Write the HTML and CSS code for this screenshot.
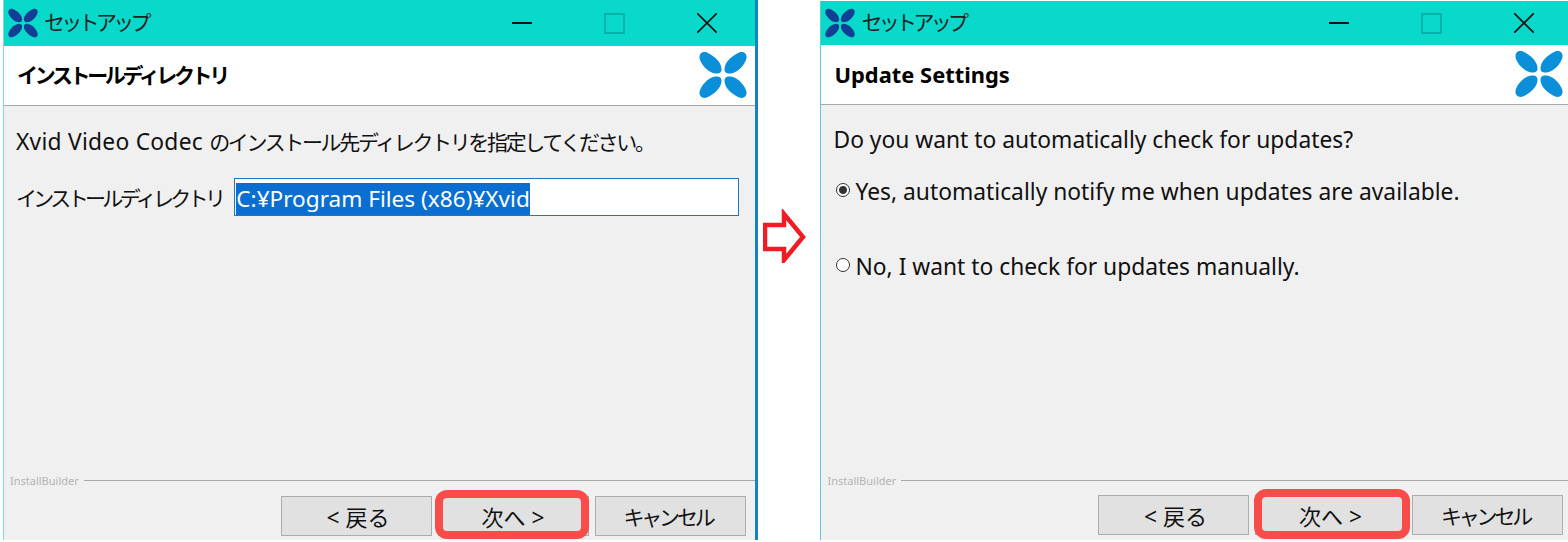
FILE: index.html
```html
<!DOCTYPE html>
<html lang="ja">
<head>
    <meta charset="UTF-8">
    <title>Xvid セットアップ</title>
    <link rel="stylesheet" href="styles.css">
</head>
<body>
    <!-- Shared logo shape -->
    <svg class="defs" width="0" height="0">
        <symbol id="petals" viewBox="0 0 48 46">
            <path d="M0.5 6C0 1 4-1 8 0.5 14 3 22.5 10 22.5 17 22.5 21 20 22 16 21.5 9 20.5 1.5 12 0.5 6Z"/>
            <path d="M47.5 6C48 1 44-1 40 0.5 34 3 25.5 10 25.5 17 25.5 21 28 22 32 21.5 39 20.5 46.5 12 47.5 6Z"/>
            <path d="M0.5 40C0 45 4 47 8 45.5 14 43 22.5 36 22.5 29 22.5 25 20 24 16 24.5 9 25.5 1.5 34 0.5 40Z"/>
            <path d="M47.5 40C48 45 44 47 40 45.5 34 43 25.5 36 25.5 29 25.5 25 28 24 32 24.5 39 25.5 46.5 34 47.5 40Z"/>
        </symbol>
    </svg>

    <!-- Install directory window -->
    <div class="window window-left">
        <div class="titlebar">
            <svg class="logo-small"><use href="#petals"/></svg>
            <span class="title kana">セットアップ</span>
            <div class="controls">
                <span class="control"><i class="minimize"></i></span>
                <span class="control"><i class="maximize"></i></span>
                <span class="control">
                    <svg class="close" viewBox="0 0 20 20"><path d="M0 0L20 20M20 0L0 20"/></svg>
                </span>
            </div>
        </div>
        <div class="header">
            <h1 class="kana">インストールディレクトリ</h1>
            <svg class="logo-large"><use href="#petals"/></svg>
        </div>
        <div class="content">
            <p class="intro">Xvid Video Codec <span class="kana">のインストール先ディレクトリを指定してください。</span></p>
            <div class="field">
                <label class="kana">インストールディレクトリ</label>
                <div class="path-box"><span class="selected">C:¥Program Files (x86)¥Xvid</span></div>
            </div>
        </div>
        <div class="footer">
            <div class="brand"><span>InstallBuilder</span><hr></div>
            <div class="buttons">
                <button>&lt; <span class="kanji">戻る</span></button>
                <button class="next"><span class="kanji">次へ</span> &gt;</button>
                <button><span class="kana">キャンセル</span></button>
            </div>
        </div>
    </div>

    <div class="arrow-col">
        <svg class="arrow" viewBox="0 0 46 54"><path d="M2 16H21V5L40 28 21 51V40H2Z"/></svg>
    </div>

    <!-- Update settings window -->
    <div class="window window-right">
        <div class="titlebar">
            <svg class="logo-small"><use href="#petals"/></svg>
            <span class="title kana">セットアップ</span>
            <div class="controls">
                <span class="control"><i class="minimize"></i></span>
                <span class="control"><i class="maximize"></i></span>
                <span class="control">
                    <svg class="close" viewBox="0 0 20 20"><path d="M0 0L20 20M20 0L0 20"/></svg>
                </span>
            </div>
        </div>
        <div class="header">
            <h1>Update Settings</h1>
            <svg class="logo-large"><use href="#petals"/></svg>
        </div>
        <div class="content">
            <p class="intro">Do you want to automatically check for updates?</p>
            <div class="option first"><i class="radio checked"></i>Yes, automatically notify me when updates are available.</div>
            <div class="option"><i class="radio"></i>No, I want to check for updates manually.</div>
        </div>
        <div class="footer">
            <div class="brand"><span>InstallBuilder</span><hr></div>
            <div class="buttons">
                <button>&lt; <span class="kanji">戻る</span></button>
                <button class="next"><span class="kanji">次へ</span> &gt;</button>
                <button><span class="kana">キャンセル</span></button>
            </div>
        </div>
    </div>
</body>
</html>
```

FILE: styles.css
```css
body {
    margin: 0;
    height: 542px;
    overflow: hidden;
    background: #fff;
    color: #111;
    font-family: "Noto Sans", "Noto Sans CJK JP", sans-serif;
    font-size: 22.8px;
    display: flex;
}

.defs {
    position: absolute;
}

/* Japanese text is narrower than the CJK font's full width */
.kana {
    font-family: "Noto Sans CJK JP", sans-serif;
    font-size: 21px;
    letter-spacing: -2.5px;
}

.kanji {
    font-family: "Noto Sans CJK JP", sans-serif;
    font-size: 22px;
}

.window {
    display: flex;
    flex-direction: column;
    background: #f0f0f0;
    height: 540px;
}

.window-left {
    width: 751px;
    margin-left: 3px;
    border-left: 1px solid #7fdcdc;
    border-right: 3px solid #1583bd;
}

.window-right {
    width: 747px;
    margin-top: 1px;
    height: 539px;
    border-left: 1px solid #62c9d0;
}

.arrow-col {
    width: 63px;
    padding-top: 209px;
    padding-left: 5px;
    box-sizing: border-box;
}

.arrow {
    width: 46px;
    height: 54px;
    display: block;
}

.arrow path {
    fill: #fff;
    stroke: #ee1c25;
    stroke-width: 4.5;
}

/* Title bar */
.titlebar {
    height: 46px;
    flex-shrink: 0;
    background: #08d9cb;
    display: flex;
    align-items: center;
}

.window-right .titlebar {
    height: 44px;
}

.logo-small {
    width: 30px;
    height: 30px;
    margin-left: 4px;
    fill: #123f94;
}

.title {
    margin: 0 0 4px 6px;
    color: #222;
    letter-spacing: -3.7px;
}

.controls {
    margin-left: auto;
    display: flex;
    padding-right: 1px;
}

.window-right .controls {
    padding-right: 0;
    margin-right: -2px;
}

.control {
    width: 92.5px;
    height: 44px;
    display: flex;
    align-items: center;
    justify-content: center;
}

.minimize {
    width: 20px;
    height: 2px;
    background: #111;
}

.maximize {
    width: 17px;
    height: 17px;
    border: 2px solid #05b3a9;
}

.close {
    width: 20px;
    height: 20px;
    stroke: #111;
    stroke-width: 1.6;
}

/* Header */
.header {
    height: 59px;
    flex-shrink: 0;
    background: #fff;
    border-bottom: 1px solid #a8a8a8;
    display: flex;
    align-items: center;
    justify-content: space-between;
    padding: 0 8px 0 13px;
}

.window-right .header {
    padding-right: 5px;
}

.header h1 {
    margin: 0;
    font-size: 21.9px;
    font-weight: 700;
    color: #000;
}

.header h1.kana {
    margin-bottom: 4px;
    font-size: 21px;
    letter-spacing: -3.35px;
}

.logo-large {
    width: 48px;
    height: 46px;
    margin-bottom: 2px;
    fill: #0a8fd8;
}

/* Body */
.content {
    flex: 1;
    padding: 18px 16px 0 12px;
}

.intro {
    margin: 0;
    line-height: 34px;
}

.window-left .intro {
    letter-spacing: 0.25px;
}

.window-left .intro .kana {
    letter-spacing: -2.35px;
}

.field {
    margin-top: 19px;
    display: flex;
    align-items: center;
    gap: 12px;
}

.field label {
    letter-spacing: -3.65px;
}

.path-box {
    flex: 1;
    height: 38px;
    background: #fff;
    border: 1px solid #1a78c2;
    padding: 4px 1px 2px;
    box-sizing: border-box;
    line-height: 32px;
    font-size: 22.6px;
}

.selected {
    display: inline-block;
    height: 32px;
    background: #0a6fd0;
    color: #fff;
}

.option {
    display: flex;
    align-items: center;
    line-height: 34px;
    margin-top: 41px;
    padding-left: 3px;
}

.option.first {
    margin-top: 18px;
}

.radio {
    width: 12px;
    height: 12px;
    margin-right: 5px;
    margin-top: -5px;
    background: #fff;
    border: 1px solid #333;
    border-radius: 50%;
    box-sizing: content-box;
}

.radio.checked {
    background: radial-gradient(circle, #333 0 3.5px, #fff 4.5px);
}

/* Footer */
.footer {
    height: 68px;
    flex-shrink: 0;
}

.brand {
    display: flex;
    align-items: center;
    height: 14px;
    margin-top: 1px;
    padding-left: 6px;
    gap: 5px;
    color: #b4b4b4;
    font-size: 11px;
}

.brand hr {
    flex: 1;
    margin: 0;
    border: 0;
    border-top: 1px solid #a8a8a8;
}

.buttons {
    margin-top: 9px;
    display: flex;
    justify-content: flex-end;
    gap: 6px;
    padding-right: 9px;
}

.window-right .buttons {
    margin-top: 8px;
    padding-right: 5px;
}

button {
    width: 151px;
    height: 40px;
    padding: 0;
    background: #e1e1e1;
    border: 1px solid #adadad;
    color: #111;
    font-family: inherit;
    font-size: 22.8px;
}

button:first-child {
    padding-left: 4px;
}

button:last-child {
    padding-right: 4px;
}

button .kana {
    letter-spacing: -3.2px;
}

/* Red marker around the next button */
.next {
    position: relative;
}

.next::after {
    content: "";
    position: absolute;
    left: -4px;
    top: -7px;
    width: 138px;
    height: 33px;
    border: 8px solid #f74c4a;
    border-radius: 12px;
}

.window-right .next::after {
    left: -2px;
    width: 140px;
    height: 34px;
}
```
